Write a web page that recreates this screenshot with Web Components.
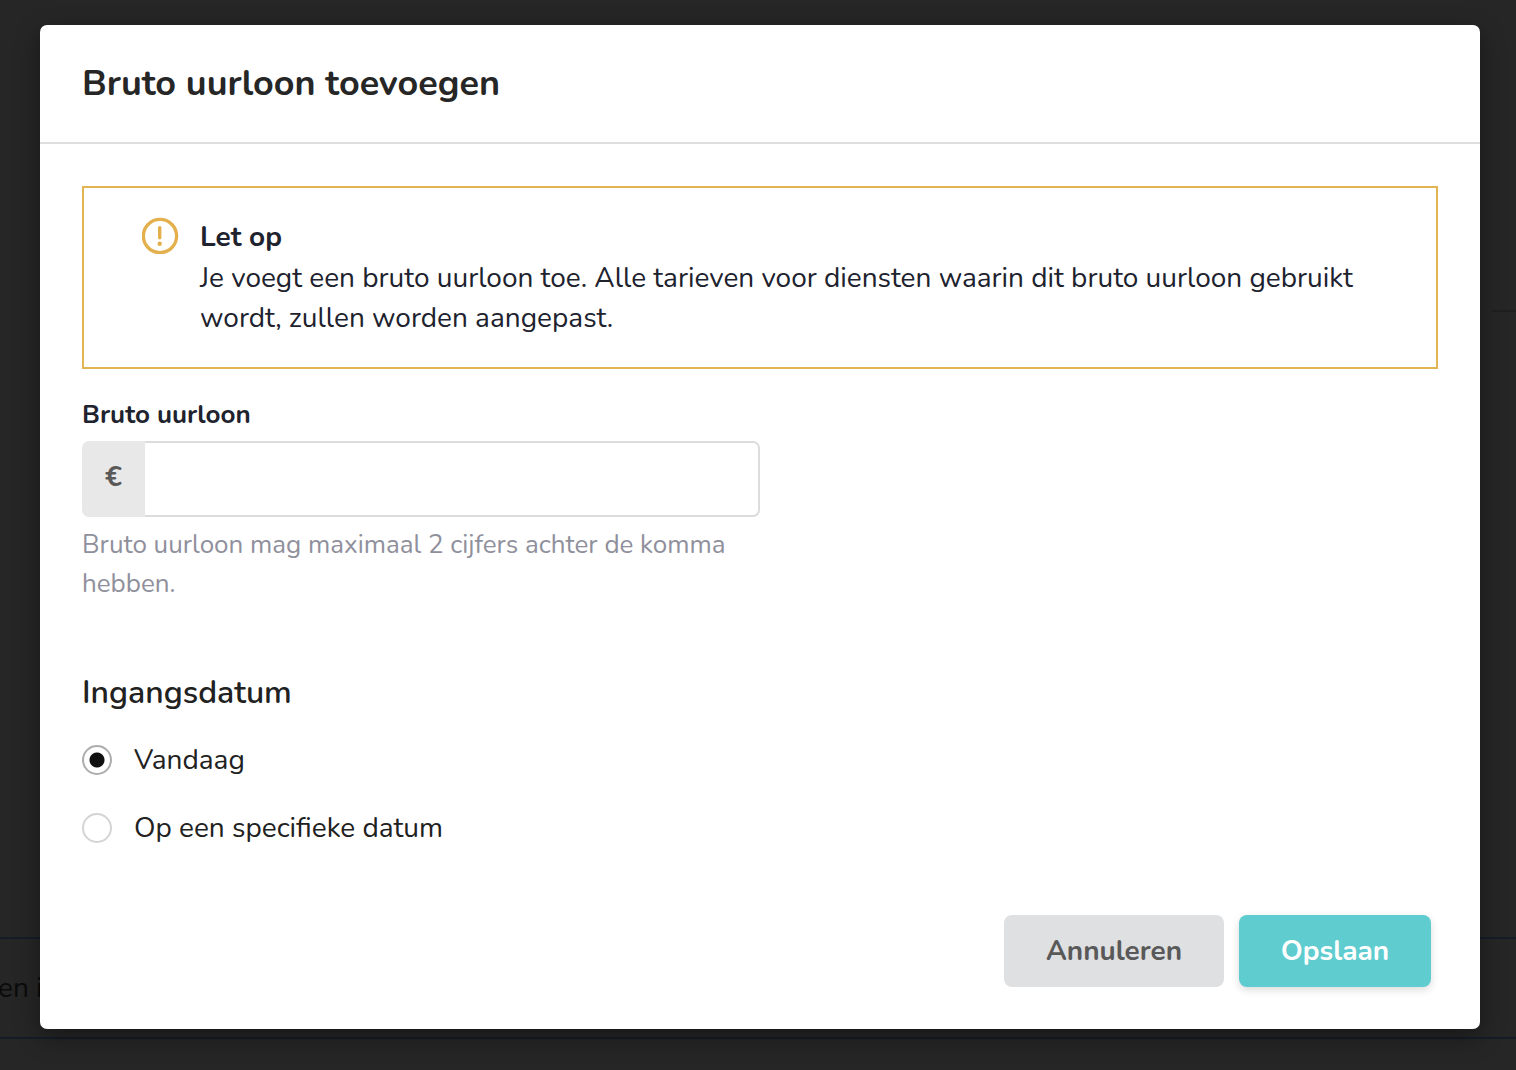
<!DOCTYPE html>
<html lang="nl">
<head>
<meta charset="utf-8">
<meta name="viewport" content="width=device-width, initial-scale=1">
<title>Bruto uurloon toevoegen</title>
<style>
  html, body { margin: 0; height: 100%; }
  body { font-family: Nunito, Lato, sans-serif; font-size: 28px; line-height: 40px; color: #212529; background: #262626; overflow: hidden; }
</style>
</head>
<body>
<app-screen>
  <page-behind slot="page">en i</page-behind>
  <modal-dialog>
    <span slot="title">Bruto uurloon toevoegen</span>
    <alert-box>
      <span slot="title">Let op</span>
      Je voegt een bruto uurloon toe. Alle tarieven voor diensten waarin dit bruto uurloon gebruikt wordt, zullen worden aangepast.
    </alert-box>
    <money-field></money-field>
    <start-date></start-date>
    <action-button slot="actions">Annuleren</action-button>
    <action-button slot="actions" variant="primary">Opslaan</action-button>
  </modal-dialog>
</app-screen>

<script>
const define = (name, html) => {
  const template = document.createElement('template');
  template.innerHTML = '<style>*{box-sizing:border-box}</style>' + html;
  customElements.define(name, class extends HTMLElement {
    constructor() {
      super();
      this.attachShadow({ mode: 'open' }).append(template.content.cloneNode(true));
    }
  });
};

define('app-screen', `
  <style>
    :host { display: grid; min-height: 100vh; }
    .page, .overlay { grid-area: 1 / 1; min-width: 0; }
    .page { display: grid; }
    .overlay { padding: 25px 36px 41px 40px; z-index: 1; }
  </style>
  <div class="page"><slot name="page"></slot></div>
  <div class="overlay"><slot></slot></div>`);

define('page-behind', `
  <style>
    :host { display: flex; flex-direction: column; justify-content: flex-end; padding-bottom: 31px; color: #0b0b0b; }
    .top { align-self: flex-end; width: 24px; height: 312px; border-bottom: 2px solid #1f1f1f; }
    .gap { flex: 1; }
    .row { display: flex; align-items: center; height: 102px; border: solid #141d27; border-width: 2px 0; }
    .row span { margin-left: -2px; }
  </style>
  <div class="top"></div>
  <div class="gap"></div>
  <div class="row"><span><slot></slot></span></div>`);

define('modal-dialog', `
  <style>
    :host { display: block; background: #fff; border-radius: 7px; box-shadow: 0 8px 24px rgba(0,0,0,.4); }
    header { padding: 35px 42px 34px; border-bottom: 2px solid #dedede; }
    h1 { margin: 0; font-size: 36px; line-height: 48px; font-weight: 750; color: #262626; }
    main { padding: 42px 42px 0; }
    footer { display: flex; justify-content: flex-end; gap: 15px; padding: 67px 49px 42px; }
  </style>
  <section role="dialog" aria-labelledby="t">
    <header><h1 id="t"><slot name="title"></slot></h1></header>
    <main><slot></slot></main>
    <footer><slot name="actions"></slot></footer>
  </section>`);

define('alert-box', `
  <style>
    :host { display: flex; gap: 21px; padding: 29px 58px; border: 2px solid #e2b452; color: #20222e; }
    svg { flex: none; }
    strong { display: block; line-height: 41px; font-weight: 700; }
  </style>
  <svg width="37" height="37" viewBox="0 0 37 37" fill="none" stroke="#e4b04d" aria-hidden="true">
    <circle cx="18" cy="19" r="16.6" stroke-width="3.3"/>
    <path d="M17.7 10.6v10.2" stroke-width="3.4" stroke-linecap="round"/>
    <circle cx="17.7" cy="26.7" r="2.2" fill="#e4b04d" stroke="none"/>
  </svg>
  <div><strong><slot name="title"></slot></strong><slot></slot></div>`);

define('money-field', `
  <style>
    :host { display: block; width: 50%; padding-top: 26px; }
    label { display: block; margin-bottom: 6px; font-size: 26px; font-weight: 700; color: #20222e; }
    .group { display: flex; height: 76px; }
    .unit { display: flex; align-items: center; justify-content: center; width: 63px; padding-bottom: 4px; background: #e8e8e8; border-radius: 7px 0 0 7px; font-weight: 700; color: #595959; }
    input { flex: 1; min-width: 0; padding: 0 20px; border: 2px solid #dcdcdc; border-left: 0; border-radius: 0 7px 7px 0; background: #fff; font: inherit; color: inherit; outline: 0; }
    p { margin: 8px 0 0; font-size: 26px; line-height: 39px; color: #8f909c; }
  </style>
  <label for="wage">Bruto uurloon</label>
  <div class="group"><span class="unit">€</span><input id="wage" type="text" inputmode="decimal" aria-describedby="hint"></div>
  <p id="hint">Bruto uurloon mag maximaal 2 cijfers achter de komma hebben.</p>`);

define('start-date', `
  <style>
    :host { display: block; padding-top: 70px; color: #212121; }
    fieldset { display: flex; flex-direction: column; gap: 28px; margin: 0; padding: 0; border: 0; min-width: 0; }
    legend { padding: 0; margin-bottom: 27px; font-size: 32px; line-height: 40px; font-weight: 600; }
    label { display: flex; align-items: center; gap: 22px; }
    input { appearance: none; flex: none; width: 30px; height: 30px; margin: 0; border: 2px solid #d4d4d4; border-radius: 50%; background: #fff; }
    input:checked { border-color: #adadad; background: radial-gradient(circle, #111 7px, #fff 8px); }
  </style>
  <fieldset>
    <legend>Ingangsdatum</legend>
    <label><input type="radio" name="start" checked>Vandaag</label>
    <label><input type="radio" name="start">Op een specifieke datum</label>
  </fieldset>`);

define('action-button', `
  <style>
    :host { display: block; --bg: #dfe0e2; --fg: #595959; --w: 220px; --shadow: none; }
    :host([variant=primary]) { --bg: #5fcccf; --fg: #fff; --w: 192px; --shadow: 0 3px 8px rgba(0,0,0,.14); }
    button { min-width: var(--w); height: 72px; padding: 0 32px; border: 0; border-radius: 8px; background: var(--bg); color: var(--fg); box-shadow: var(--shadow); font: inherit; font-weight: 700; display: block; }
  </style>
  <button type="button"><slot></slot></button>`);
</script>
</body>
</html>
